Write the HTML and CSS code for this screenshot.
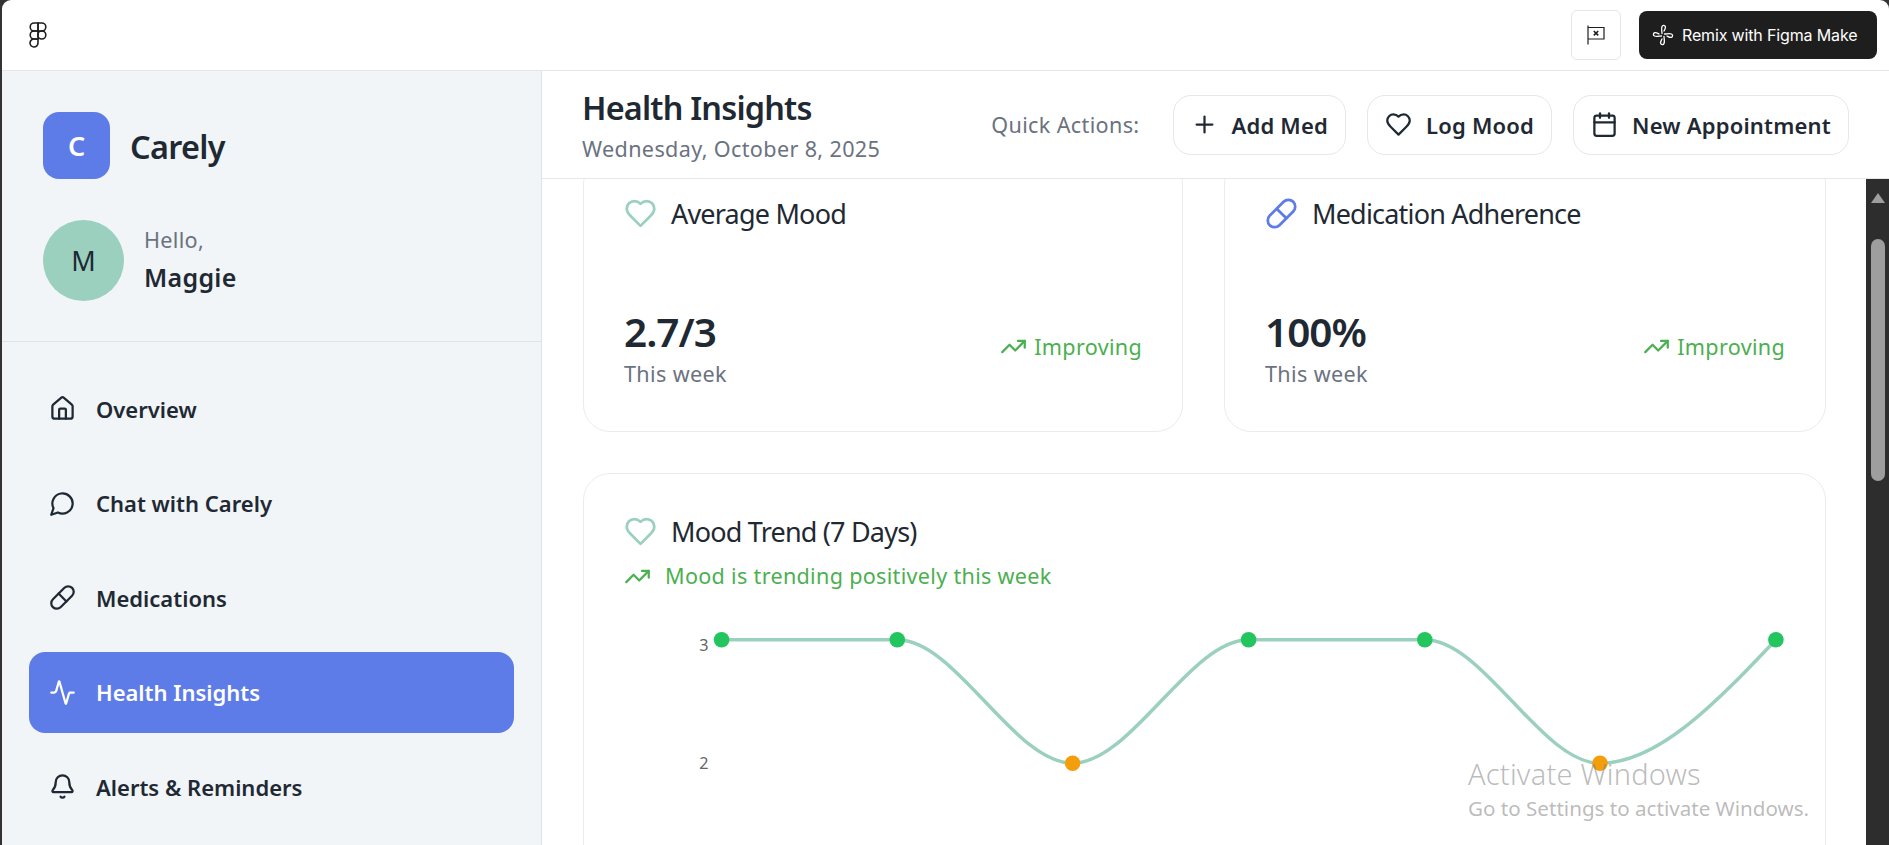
FILE: index.html
```html
<!DOCTYPE html>
<html lang="en">
<head>
    <meta charset="UTF-8">
    <title>Carely - Health Insights</title>
    <link rel="stylesheet" href="styles.css">
</head>
<body>

<div class="window">
    <header class="topbar">
        <svg class="figma-logo" viewBox="0 0 18 26" fill="none" stroke="#1e1e1e" stroke-width="1.6">
            <path d="M9 1H5.2a4 4 0 0 0 0 8H9z"/>
            <path d="M9 1h3.8a4 4 0 0 1 0 8H9z"/>
            <path d="M9 9H5.2a4 4 0 0 0 0 8H9z"/>
            <circle cx="12.8" cy="13" r="4"/>
            <path d="M5.2 17H9v4a4 4 0 1 1-3.8-4z"/>
        </svg>
        <div class="topbar-actions">
            <button class="flag-btn">
                <svg width="18" height="20" viewBox="0 0 18 20" fill="none" stroke="#1e1e1e" stroke-width="1.2">
                    <path d="M1 0.5V19.5"/>
                    <path d="M1 2.5H17V14H1"/>
                    <path d="M6.8 6l4.4 4.4M11.2 6l-4.4 4.4" stroke-width="1.6"/>
                </svg>
            </button>
            <button class="remix-btn">
                <svg width="24" height="24" viewBox="0 0 24 24" fill="none" stroke="#fff" stroke-width="1.3" stroke-linecap="round" stroke-linejoin="round">
                    <path id="blade" d="M11 10.5C11 8 10 6 11 3.5 11.6 2 13.8 2 14.4 3.8 14.8 5 13.8 6.5 13 8"/>
                    <use href="#blade" transform="rotate(90 12 12)"/>
                    <use href="#blade" transform="rotate(180 12 12)"/>
                    <use href="#blade" transform="rotate(270 12 12)"/>
                </svg>
                <span>Remix with Figma Make</span>
            </button>
        </div>
    </header>

    <div class="app">
        <aside class="sidebar">
            <div class="side-head">
                <div class="brand">
                    <div class="brand-box">C</div>
                    <span class="brand-name">Carely</span>
                </div>
                <div class="user">
                    <div class="avatar">M</div>
                    <div class="user-text">
                        <p class="hello">Hello,</p>
                        <p class="user-name">Maggie</p>
                    </div>
                </div>
            </div>
            <nav class="nav">
                <a class="nav-item">
                    <svg class="icon" viewBox="0 0 24 24"><path d="M15 21v-8a1 1 0 0 0-1-1h-4a1 1 0 0 0-1 1v8"/><path d="M3 10a2 2 0 0 1 .709-1.528l7-5.999a2 2 0 0 1 2.582 0l7 5.999A2 2 0 0 1 21 10v9a2 2 0 0 1-2 2H5a2 2 0 0 1-2-2z"/></svg>
                    Overview
                </a>
                <a class="nav-item">
                    <svg class="icon" viewBox="0 0 24 24"><path d="M7.9 20A9 9 0 1 0 4 16.1L2 22Z"/></svg>
                    Chat with Carely
                </a>
                <a class="nav-item">
                    <svg class="icon" viewBox="0 0 24 24"><path d="m10.5 20.5 10-10a4.95 4.95 0 1 0-7-7l-10 10a4.95 4.95 0 1 0 7 7Z"/><path d="m8.5 8.5 7 7"/></svg>
                    Medications
                </a>
                <a class="nav-item active">
                    <svg class="icon" viewBox="0 0 24 24"><path d="M22 12h-2.48a2 2 0 0 0-1.93 1.46l-2.35 8.36a.25.25 0 0 1-.48 0L9.24 2.18a.25.25 0 0 0-.48 0l-2.35 8.36A2 2 0 0 1 4.49 12H2"/></svg>
                    Health Insights
                </a>
                <a class="nav-item">
                    <svg class="icon" viewBox="0 0 24 24"><path d="M10.268 21a2 2 0 0 0 3.464 0"/><path d="M3.262 15.326A1 1 0 0 0 4 17h16a1 1 0 0 0 .74-1.673C19.41 13.956 18 12.499 18 8A6 6 0 0 0 6 8c0 4.499-1.411 5.956-2.738 7.326"/></svg>
                    Alerts &amp; Reminders
                </a>
            </nav>
        </aside>

        <main class="main">
            <div class="page-head">
                <div>
                    <h1>Health Insights</h1>
                    <p class="date">Wednesday, October 8, 2025</p>
                </div>
                <div class="quick">
                    <span class="quick-label">Quick Actions:</span>
                    <button class="quick-btn">
                        <svg class="icon" viewBox="0 0 24 24"><path d="M5 12h14"/><path d="M12 5v14"/></svg>
                        Add Med
                    </button>
                    <button class="quick-btn">
                        <svg class="icon" viewBox="0 0 24 24"><path d="M19 14c1.49-1.46 3-3.21 3-5.5A5.5 5.5 0 0 0 16.5 3c-1.76 0-3 .5-4.5 2-1.5-1.5-2.74-2-4.5-2A5.5 5.5 0 0 0 2 8.5c0 2.3 1.5 4.05 3 5.5l7 7Z"/></svg>
                        Log Mood
                    </button>
                    <button class="quick-btn">
                        <svg class="icon" viewBox="0 0 24 24"><path d="M8 2v4"/><path d="M16 2v4"/><rect x="3" y="4" width="18" height="18" rx="2"/><path d="M3 10h18"/></svg>
                        New Appointment
                    </button>
                </div>
            </div>

            <div class="scroll">
                <div class="content">
                    <div class="stats">
                        <div class="card stat">
                            <div class="card-title">
                                <svg class="icon icon-lg mint" viewBox="0 0 24 24"><path d="M19 14c1.49-1.46 3-3.21 3-5.5A5.5 5.5 0 0 0 16.5 3c-1.76 0-3 .5-4.5 2-1.5-1.5-2.74-2-4.5-2A5.5 5.5 0 0 0 2 8.5c0 2.3 1.5 4.05 3 5.5l7 7Z"/></svg>
                                Average Mood
                            </div>
                            <div class="stat-row">
                                <div>
                                    <div class="stat-value">2.7/3</div>
                                    <div class="stat-note">This week</div>
                                </div>
                                <div class="trend">
                                    <svg class="icon" viewBox="0 0 24 24"><path d="M22 7 13.5 15.5 8.5 10.5 2 17"/><path d="M16 7h6v6"/></svg>
                                    Improving
                                </div>
                            </div>
                        </div>
                        <div class="card stat">
                            <div class="card-title">
                                <svg class="icon icon-lg blue" viewBox="0 0 24 24"><path d="m10.5 20.5 10-10a4.95 4.95 0 1 0-7-7l-10 10a4.95 4.95 0 1 0 7 7Z"/><path d="m8.5 8.5 7 7"/></svg>
                                Medication Adherence
                            </div>
                            <div class="stat-row">
                                <div>
                                    <div class="stat-value">100%</div>
                                    <div class="stat-note">This week</div>
                                </div>
                                <div class="trend">
                                    <svg class="icon" viewBox="0 0 24 24"><path d="M22 7 13.5 15.5 8.5 10.5 2 17"/><path d="M16 7h6v6"/></svg>
                                    Improving
                                </div>
                            </div>
                        </div>
                    </div>

                    <div class="card chart-card">
                        <div class="card-title">
                            <svg class="icon icon-lg mint" viewBox="0 0 24 24"><path d="M19 14c1.49-1.46 3-3.21 3-5.5A5.5 5.5 0 0 0 16.5 3c-1.76 0-3 .5-4.5 2-1.5-1.5-2.74-2-4.5-2A5.5 5.5 0 0 0 2 8.5c0 2.3 1.5 4.05 3 5.5l7 7Z"/></svg>
                            Mood Trend (7 Days)
                        </div>
                        <div class="trend trend-line">
                            <svg class="icon" viewBox="0 0 24 24"><path d="M22 7 13.5 15.5 8.5 10.5 2 17"/><path d="M16 7h6v6"/></svg>
                            Mood is trending positively this week
                        </div>
                        <svg class="chart" width="1160" height="240" viewBox="625 620 1160 240">
                            <text class="tick" x="704" y="652" text-anchor="middle">3</text>
                            <text class="tick" x="704" y="770" text-anchor="middle">2</text>
                            <path class="mood-line" d="M721.6 640.7 L897.3 640.7 C955.9 640.7 1014 764.3 1072.6 764.3 C1131.2 764.3 1190 640.7 1248.6 640.7 L1424.8 640.7 C1483.4 640.7 1541.5 764.3 1600 764.3 C1658.6 764.3 1717.3 702.5 1775.9 640.7"/>
                            <circle class="dot-good" cx="721.6" cy="640.7" r="7.8"/>
                            <circle class="dot-good" cx="897.3" cy="640.7" r="7.8"/>
                            <circle class="dot-low" cx="1072.6" cy="764.3" r="7.8"/>
                            <circle class="dot-good" cx="1248.6" cy="640.7" r="7.8"/>
                            <circle class="dot-good" cx="1424.8" cy="640.7" r="7.8"/>
                            <circle class="dot-low" cx="1600" cy="764.3" r="7.8"/>
                            <circle class="dot-good" cx="1775.9" cy="640.7" r="7.8"/>
                        </svg>
                    </div>
                </div>
                <div class="scrollbar">
                    <div class="scroll-arrow"></div>
                    <div class="scroll-thumb"></div>
                </div>
            </div>
        </main>
    </div>
</div>

<div class="activate">
    <p class="activate-title">Activate Windows</p>
    <p class="activate-note">Go to Settings to activate Windows.</p>
</div>

</body>
</html>
```

FILE: styles.css
```css
* {
    box-sizing: border-box;
}

html, body {
    margin: 0;
    height: 100%;
    overflow: hidden;
    background-color: #333;
}

body {
    font-family: "Noto Sans", sans-serif;
    font-size: 21.6px;
    color: #1f2933;
}

p, h1 {
    margin: 0;
}

button {
    font-family: inherit;
    cursor: pointer;
}

.window {
    height: 845px;
    margin-left: 2px;
    background-color: #fff;
    border-radius: 9px 9px 0 0;
    display: flex;
    flex-direction: column;
    overflow: hidden;
}

/* top bar */
.topbar {
    height: 71px;
    flex-shrink: 0;
    padding: 0 12px 0 27px;
    border-bottom: 1px solid #e5e7eb;
    display: flex;
    justify-content: space-between;
    align-items: center;
}

.figma-logo {
    width: 18px;
    height: 26px;
    margin-bottom: 1px;
}

.topbar-actions {
    display: flex;
    align-items: center;
    gap: 18px;
}

.flag-btn {
    width: 50px;
    height: 50px;
    padding: 0;
    background-color: #fff;
    border: 1px solid #e6e6e6;
    border-radius: 6px;
    display: flex;
    align-items: center;
    justify-content: center;
}

.remix-btn {
    width: 238px;
    height: 48px;
    padding: 0 0 0 12px;
    background-color: #1e1e1e;
    border: none;
    border-radius: 8px;
    color: #fff;
    font-family: Inter, sans-serif;
    font-size: 16px;
    font-weight: 400;
    letter-spacing: -0.15px;
    display: flex;
    align-items: center;
    gap: 7px;
}

/* layout */
.app {
    flex: 1;
    min-height: 0;
    display: flex;
}

.sidebar {
    width: 540px;
    flex-shrink: 0;
    background-color: #f1f5f8;
    border-right: 1px solid #dde3e8;
}

.side-head {
    padding: 41px 41px 40px;
    border-bottom: 1px solid #dde3e8;
}

.brand {
    display: flex;
    align-items: center;
    gap: 20px;
    margin-bottom: 41px;
}

.brand-box {
    width: 67px;
    height: 67px;
    background-color: #5e7ce8;
    border-radius: 16px;
    color: #fff;
    font-size: 27px;
    font-weight: 600;
    display: flex;
    align-items: center;
    justify-content: center;
}

.brand-name {
    font-size: 32.4px;
    font-weight: 600;
    letter-spacing: -0.7px;
}

.user {
    display: flex;
    align-items: center;
    gap: 20px;
}

.avatar {
    width: 81px;
    height: 81px;
    background-color: #9bd0bf;
    border-radius: 50%;
    font-size: 27px;
    display: flex;
    align-items: center;
    justify-content: center;
}

.user-text {
    margin-bottom: 3px;
}

.hello {
    color: #6b7280;
    letter-spacing: 0.3px;
    line-height: 36px;
}

.user-name {
    font-size: 25px;
    font-weight: 600;
    letter-spacing: 0.3px;
    line-height: 39px;
}

.nav {
    padding: 26px 27px;
    display: flex;
    flex-direction: column;
    gap: 13.5px;
}

.nav-item {
    height: 81px;
    padding-left: 20px;
    border-radius: 16px;
    font-size: 22px;
    font-weight: 600;
    display: flex;
    align-items: center;
    gap: 20px;
}

.nav-item.active {
    background-color: #5e7ce8;
    color: #fff;
}

.icon {
    width: 27px;
    height: 27px;
    flex-shrink: 0;
    fill: none;
    stroke: currentColor;
    stroke-width: 2;
    stroke-linecap: round;
    stroke-linejoin: round;
}

.icon-lg {
    width: 33px;
    height: 33px;
}

.mint {
    color: #9bd0bf;
}

.blue {
    color: #5e7ce8;
}

/* main column */
.main {
    flex: 1;
    min-width: 0;
    display: flex;
    flex-direction: column;
}

.page-head {
    height: 108px;
    flex-shrink: 0;
    padding: 0 40px;
    background-color: #fff;
    border-bottom: 1px solid #e5e7eb;
    display: flex;
    justify-content: space-between;
    align-items: center;
}

h1 {
    font-size: 32.4px;
    font-weight: 600;
    letter-spacing: -0.8px;
    line-height: 44px;
}

.date {
    color: #6b7280;
    letter-spacing: 0.35px;
    line-height: 32px;
    margin-top: 4px;
}

.quick {
    display: flex;
    align-items: center;
    gap: 21px;
}

.quick-label {
    color: #6b7280;
    letter-spacing: 0.35px;
    margin-right: 12px;
}

.quick-btn {
    height: 60px;
    padding: 0 17px;
    background-color: #fff;
    border: 1px solid #e5e7eb;
    border-radius: 18px;
    color: #1f2933;
    font-size: 22px;
    font-weight: 600;
    letter-spacing: 0.2px;
    display: flex;
    align-items: center;
    gap: 14px;
}

.scroll {
    flex: 1;
    min-height: 0;
    display: flex;
    overflow: hidden;
}

.content {
    flex: 1;
    min-width: 0;
    padding: 0 40px 0 41px;
    margin-top: -22px;
}

.scrollbar {
    width: 23px;
    flex-shrink: 0;
    background-color: #2d2d2d;
    padding-top: 14px;
}

.scroll-arrow {
    width: 0;
    height: 0;
    margin: 0 auto;
    border-left: 7.5px solid transparent;
    border-right: 7.5px solid transparent;
    border-bottom: 10px solid #9e9e9e;
}

.scroll-thumb {
    width: 14px;
    height: 242px;
    margin: 36px auto 0;
    background-color: #9e9e9e;
    border-radius: 7px;
}

/* cards */
.card {
    background-color: #fff;
    border: 1px solid #e9ecef;
    border-radius: 27px;
    padding: 40px;
}

.stats {
    display: grid;
    grid-template-columns: 600px 602px;
    gap: 41px;
    margin-bottom: 41px;
}

.stat {
    height: 275px;
    display: flex;
    flex-direction: column;
    justify-content: space-between;
    padding-bottom: 40px;
}

.stat .card-title {
    margin-top: -1px;
}

.card-title {
    font-size: 27px;
    letter-spacing: -0.8px;
    display: flex;
    align-items: center;
    gap: 14px;
    height: 33px;
}

.stat-row {
    display: flex;
    justify-content: space-between;
    align-items: center;
}

.stat-row .trend {
    margin-bottom: 6px;
}

.stat-value {
    font-size: 40.5px;
    font-weight: 600;
    letter-spacing: -1px;
    line-height: 50px;
}

.stat-note {
    color: #6b7280;
    letter-spacing: 0.35px;
    line-height: 34px;
}

.trend {
    color: #4caf50;
    letter-spacing: 0.3px;
    display: flex;
    align-items: center;
    gap: 7px;
}

.chart-card {
    height: 500px;
    padding-top: 41px;
}

.trend-line {
    margin-top: 13px;
    gap: 14px;
    line-height: 30px;
}

.chart {
    display: block;
    margin: 28px 0 0 1px;
}

.tick {
    font-size: 16.2px;
    fill: #666;
}

.mood-line {
    fill: none;
    stroke: #9bd0bf;
    stroke-width: 3.5;
}

.dot-good {
    fill: #22c55e;
}

.dot-low {
    fill: #f59e0b;
}

/* windows watermark */
.activate {
    position: absolute;
    left: 1468px;
    top: 755px;
    color: rgba(130, 130, 130, 0.55);
    pointer-events: none;
}

.activate-title {
    font-size: 29px;
    font-weight: 300;
    letter-spacing: 0.2px;
    line-height: 38px;
}

.activate-note {
    font-size: 20.6px;
    line-height: 30px;
}
```
